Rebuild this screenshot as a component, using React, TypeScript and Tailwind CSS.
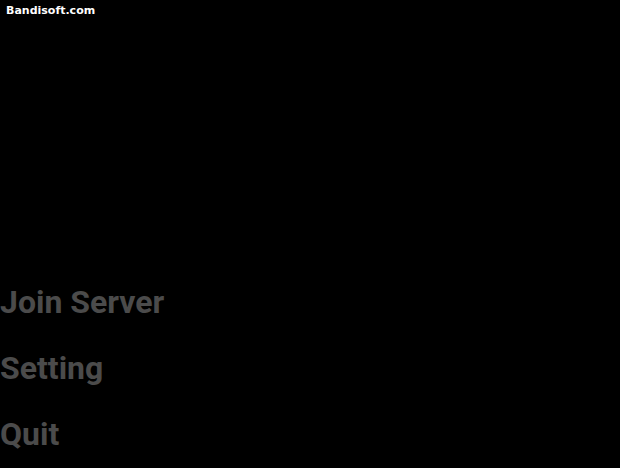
export default function App() {
    const items = ['Join Server', 'Setting', 'Quit'];

    return (
        <div className="w-[620px] h-[468px] bg-black overflow-hidden flex flex-col">
            {/* recorder watermark */}
            <div className="pl-[6px] pt-[4px] text-[11px] leading-[14px] font-bold text-white font-['DejaVu_Sans',sans-serif]">
                Bandisoft.com
            </div>

            {/* main menu */}
            <div className="mt-[268px] flex flex-col gap-[34px] font-['Roboto',sans-serif]">
                {items.map((label) => (
                    <div key={label} className="text-[32px] leading-[32px] font-bold text-[#4b4b4b]">
                        {label}
                    </div>
                ))}
            </div>
        </div>
    );
}
